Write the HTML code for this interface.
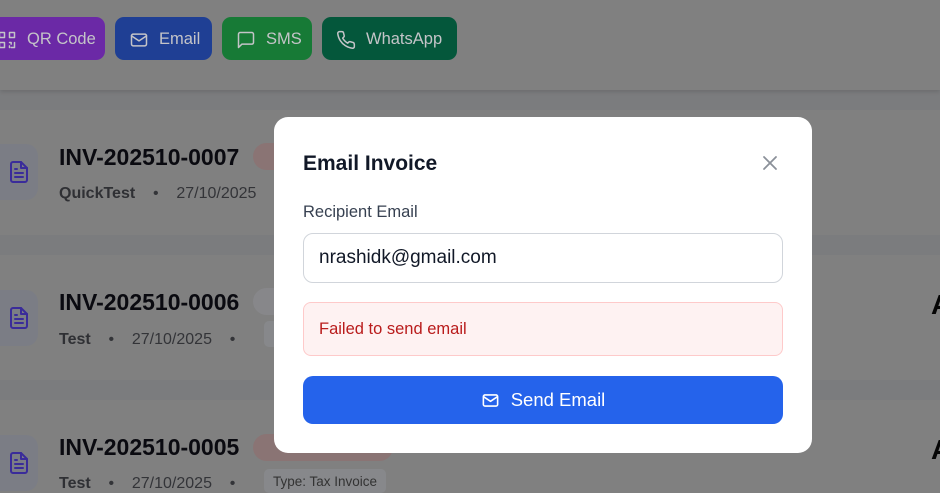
<!DOCTYPE html>
<html><head><meta charset="utf-8"><style>
*{box-sizing:border-box;margin:0;padding:0}
html,body{width:940px;height:493px;overflow:hidden}
body{background:#7b7c7e;font-family:"Liberation Sans",sans-serif}
#w{position:relative;width:940px;height:493px;overflow:hidden}
.top{position:absolute;left:0;top:0;width:940px;height:90px;background:#808080;box-shadow:0 2px 4px rgba(0,0,0,.12)}
.btn{position:absolute;top:17px;height:43px;border-radius:9px;color:#c4c4c8;font-size:16.5px;display:flex;align-items:center;gap:10px;padding-left:14px;padding-top:2px;white-space:nowrap}
.btn svg{width:20px;height:20px;fill:none;stroke:#c4c4c8;stroke-width:1.8;stroke-linecap:round;stroke-linejoin:round;flex:none}
.card{position:absolute;left:0;width:940px;height:125px;background:#808080}
.ic{position:absolute;left:-18px;width:56px;height:56px;border-radius:12px;background:#7b7d85;display:flex;align-items:center;justify-content:center;padding-left:18px}
.ic svg{width:24px;height:24px;fill:none;stroke:#3a2c9a;stroke-width:2;stroke-linecap:round;stroke-linejoin:round}
.t{position:absolute;left:59px;font-weight:bold;font-size:23px;color:#0a0a10}
.s{position:absolute;left:59px;font-size:16px;color:#333438;white-space:pre}
.s b{color:#2f3034}
.badge{position:absolute;left:253px;width:140px;height:27px;border-radius:14px}
.chip{position:absolute;left:264px;height:26px;border-radius:5px;background:#87888b;color:#333;font-size:13.5px;padding:5px 9px}
.A{position:absolute;left:931px;font-weight:bold;font-size:28px;color:#050505}
.modal{position:absolute;left:274px;top:117px;width:538px;height:336px;background:#fff;border-radius:14px}
</style></head><body><div id="w">
<div class="top">
 <div class="btn" style="left:-17px;width:122px;background:#6b29a6"><svg viewBox="0 0 24 24"><rect x="3" y="3" width="6" height="6"/><rect x="15" y="3" width="6" height="6"/><rect x="3" y="15" width="6" height="6"/><path d="M15 15h2v2M21 15v6h-4M15 19v2"/></svg>QR Code</div>
 <div class="btn" style="left:115px;width:97px;background:#1f3f94"><svg viewBox="0 0 24 24"><rect x="3" y="5" width="18" height="14" rx="2"/><path d="M3 7l9 6 9-6"/></svg>Email</div>
 <div class="btn" style="left:222px;width:90px;background:#177a36"><svg viewBox="0 0 24 24"><path d="M21 15a2 2 0 0 1-2 2H7l-4 4V5a2 2 0 0 1 2-2h14a2 2 0 0 1 2 2z"/></svg>SMS</div>
 <div class="btn" style="left:322px;width:135px;background:#04573b"><svg viewBox="0 0 24 24"><path d="M22 16.9v3a2 2 0 0 1-2.2 2 19.8 19.8 0 0 1-8.6-3.1 19.5 19.5 0 0 1-6-6A19.8 19.8 0 0 1 2.1 4.2 2 2 0 0 1 4.1 2h3a2 2 0 0 1 2 1.7c.1.9.4 1.8.7 2.7a2 2 0 0 1-.5 2.1L8 9.8a16 16 0 0 0 6 6l1.3-1.3a2 2 0 0 1 2.1-.4c.9.3 1.8.6 2.7.7a2 2 0 0 1 1.7 2z"/></svg>WhatsApp</div>
</div>

<div class="card" style="top:110px"></div>
<div class="card" style="top:255px"></div>
<div class="card" style="top:400px;height:93px"></div>

<div class="ic" style="top:144px"><svg viewBox="0 0 24 24"><path d="M14 2H6a2 2 0 0 0-2 2v16a2 2 0 0 0 2 2h12a2 2 0 0 0 2-2V8z"/><path d="M14 2v6h6M8 13h8M8 17h8M8 9h2"/></svg></div>
<div class="t" style="top:144px">INV-202510-0007</div>
<div class="s" style="top:185px"><b>QuickTest</b>    •    27/10/2025</div>
<div class="badge" style="top:143px;background:#8a7474"></div>

<div class="ic" style="top:290px"><svg viewBox="0 0 24 24"><path d="M14 2H6a2 2 0 0 0-2 2v16a2 2 0 0 0 2 2h12a2 2 0 0 0 2-2V8z"/><path d="M14 2v6h6M8 13h8M8 17h8M8 9h2"/></svg></div>
<div class="t" style="top:289px">INV-202510-0006</div>
<div class="s" style="top:331px"><b>Test</b>    •    27/10/2025    •</div>
<div class="badge" style="top:288px;background:#87878a"></div>
<div class="chip" style="top:321px;width:30px"></div>
<div class="A" style="top:289px">A</div>

<div class="ic" style="top:435px"><svg viewBox="0 0 24 24"><path d="M14 2H6a2 2 0 0 0-2 2v16a2 2 0 0 0 2 2h12a2 2 0 0 0 2-2V8z"/><path d="M14 2v6h6M8 13h8M8 17h8M8 9h2"/></svg></div>
<div class="t" style="top:434px">INV-202510-0005</div>
<div class="s" style="top:475px;height:18px;overflow:hidden"><b>Test</b>    •    27/10/2025    •</div>
<div class="badge" style="top:434px;background:#8a7474"></div>
<div class="chip" style="top:469px;height:24px;overflow:hidden">Type: Tax Invoice</div>
<div class="A" style="top:434px">A</div>

<div class="modal">
 <div style="position:absolute;left:29px;top:35px;font-size:21px;font-weight:bold;color:#111827">Email Invoice</div>
 <svg style="position:absolute;left:487px;top:37px" width="18" height="18" viewBox="0 0 18 18"><path d="M3 3l12 12M15 3L3 15" stroke="#8b9099" stroke-width="1.8" stroke-linecap="round"/></svg>
 <div style="position:absolute;left:29px;top:86px;font-size:16.5px;color:#374151">Recipient Email</div>
 <div style="position:absolute;left:29px;top:116px;width:480px;height:50px;border:1px solid #d1d5db;border-radius:10px;font-size:19px;color:#111827;padding:13px 15px">nrashidk@gmail.com</div>
 <div style="position:absolute;left:29px;top:185px;width:480px;height:54px;border:1px solid #fecaca;background:#fef2f2;border-radius:8px;font-size:16.5px;color:#b91c1c;padding:17px 15px">Failed to send email</div>
 <div style="position:absolute;left:29px;top:259px;width:480px;height:48px;background:#2563eb;border-radius:10px;color:#fff;font-size:18.5px;display:flex;align-items:center;justify-content:center;gap:11px"><svg width="19" height="19" viewBox="0 0 24 24" fill="none" stroke="#fff" stroke-width="2" stroke-linejoin="round"><rect x="3" y="5" width="18" height="14" rx="2"/><path d="M3 7l9 6 9-6"/></svg>Send Email</div>
</div>
</div></body></html>
